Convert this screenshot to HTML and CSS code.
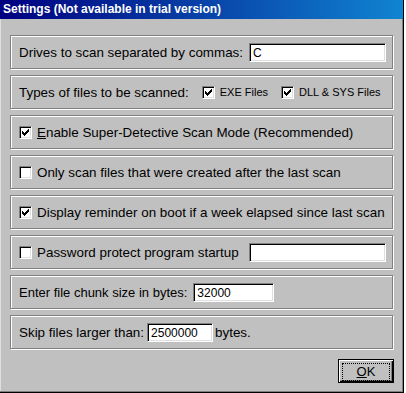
FILE: index.html
```html
<!DOCTYPE html>
<html lang="en">
  <head>
    <meta charset="UTF-8" />
    <meta name="viewport" content="width=device-width, initial-scale=1.0" />
    <title>Settings</title>
    <link rel="stylesheet" href="styles.css">
  </head>
  <body>
    <div class="window">
      <div class="titlebar">Settings (Not available in trial version)</div>
      <div class="content">
        <div class="group">
          <span>Drives to scan separated by commas:</span>
          <div class="field wide push">C</div>
        </div>

        <div class="group">
          <span>Types of files to be scanned:</span>
          <label class="check small first">
            <span class="box checked"></span>EXE Files
          </label>
          <label class="check small">
            <span class="box checked"></span>DLL &amp; SYS Files
          </label>
        </div>

        <div class="group">
          <label class="check">
            <span class="box checked"></span><span><u>E</u>nable Super-Detective Scan Mode (Recommended)</span>
          </label>
        </div>

        <div class="group">
          <label class="check">
            <span class="box"></span>Only scan files that were created after the last scan
          </label>
        </div>

        <div class="group">
          <label class="check">
            <span class="box checked"></span>Display reminder on boot if a week elapsed since last scan
          </label>
        </div>

        <div class="group">
          <label class="check">
            <span class="box"></span>Password protect program startup
          </label>
          <div class="field wide push"></div>
        </div>

        <div class="group">
          <span class="tight">Enter file chunk size in bytes:</span>
          <div class="field chunk">32000</div>
        </div>

        <div class="group">
          <span>Skip files larger than:</span>
          <div class="field skip">2500000</div>
          <span class="unit">bytes.</span>
        </div>

        <div class="actions">
          <button class="ok"><span class="focus"><u>O</u>K</span></button>
        </div>
      </div>
    </div>

    <script>
      // draw the pixel check mark into every checked box
      var tick = '<svg width="13" height="13" viewBox="0 0 13 13" shape-rendering="crispEdges">' +
        [[3, 5], [4, 6], [5, 7], [6, 6], [7, 5], [8, 4], [9, 3]].map(function (p) {
          return '<rect x="' + p[0] + '" y="' + p[1] + '" width="1" height="3" fill="#000"/>';
        }).join("") + "</svg>";
      document.querySelectorAll(".box.checked").forEach(function (b) {
        b.innerHTML = tick;
      });
    </script>
  </body>
</html>
```

FILE: styles.css
```css
body {
  margin: 0;
  background-color: #fff;
  font-family: "Liberation Sans", Arial, sans-serif;
  font-size: 13.4px;
  color: #000;
}

.window {
  width: 404px;
  height: 393px;
  box-sizing: border-box;
  background-color: #c0c0c0;
  border-right: 1px solid #000;
  border-bottom: 1px solid #000;
  box-shadow: inset -1px -1px 0 #808080, inset 1px 0 0 #dfdfdf;
}

.titlebar {
  height: 19px;
  line-height: 19px;
  padding-left: 3px;
  background: linear-gradient(to right, #000080, #1084d0);
  color: #fff;
  font-weight: bold;
  font-size: 12px;
}

.content {
  display: flex;
  flex-direction: column;
  gap: 6px;
  padding: 16px 0 0 10px;
}

.group {
  display: flex;
  align-items: center;
  width: 383px;
  height: 34px;
  box-sizing: border-box;
  padding: 0 6px 0 8px;
  border: 1px solid #808080;
  box-shadow: inset 1px 1px 0 #fff, 1px 1px 0 #fff;
  white-space: nowrap;
}

.group > * {
  flex-shrink: 0;
}

.tight {
  font-size: 13px;
}

.field {
  height: 19px;
  box-sizing: border-box;
  padding: 2px 2px 0 3px;
  background-color: #fff;
  font-size: 12px;
  line-height: 15px;
  border-top: 1px solid #808080;
  border-left: 1px solid #808080;
  border-right: 1px solid #fff;
  border-bottom: 1px solid #fff;
  box-shadow: inset 1px 1px 0 #000, inset -1px -1px 0 #dfdfdf;
}

.field.wide {
  width: 137px;
}

.field.push {
  margin-left: auto;
}

.field.chunk {
  width: 81px;
  margin-left: 6px;
}

.field.skip {
  width: 66px;
  margin-left: 3px;
}

.unit {
  margin-left: 2px;
}

.check {
  display: flex;
  align-items: center;
}

.check.small {
  font-size: 11px;
  margin-left: 13px;
}

.check.first {
  margin-left: 13px;
}

.box {
  width: 13px;
  height: 13px;
  box-sizing: border-box;
  margin-right: 5px;
  background-color: #fff;
  border-top: 1px solid #808080;
  border-left: 1px solid #808080;
  border-right: 1px solid #fff;
  border-bottom: 1px solid #fff;
  box-shadow: inset 1px 1px 0 #000, inset -1px -1px 0 #dfdfdf;
  position: relative;
}

.box svg {
  position: absolute;
  left: -1px;
  top: -1px;
}

.actions {
  display: flex;
  justify-content: flex-end;
  width: 384px;
  margin-top: 4px;
}

.ok {
  width: 56px;
  height: 24px;
  padding: 3px;
  background-color: #c0c0c0;
  border: 1px solid #000;
  box-shadow: inset 1px 1px 0 #fff, inset -1px -1px 0 #000, inset -2px -2px 0 #808080;
  font-family: "Liberation Sans", Arial, sans-serif;
  font-size: 13px;
  color: #000;
}

.focus {
  display: block;
  height: 16px;
  line-height: 15px;
  border: 1px dotted #000;
}
```
